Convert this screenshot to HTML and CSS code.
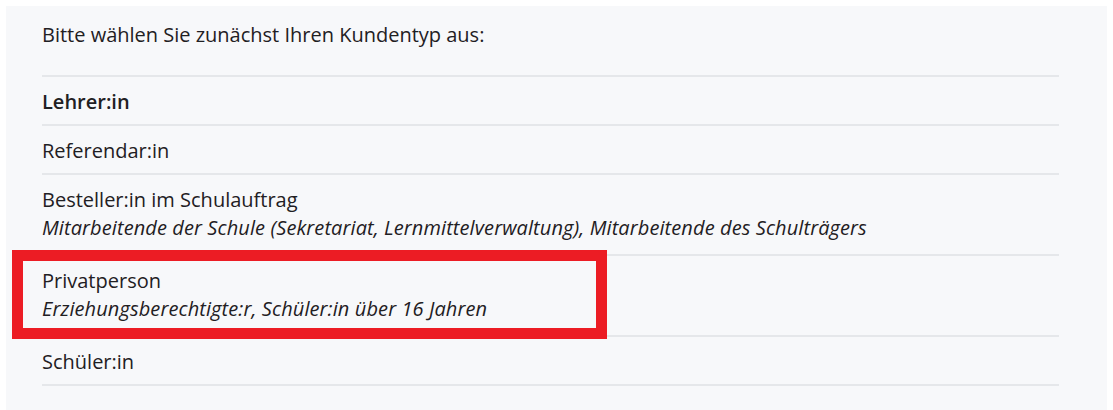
FILE: index.html
```html
<!DOCTYPE html>
<html lang="de">
<head>
<meta charset="utf-8">
<title>Kundentyp</title>
<link rel="stylesheet" href="styles.css">
</head>
<body>
<div class="panel">
  <p class="intro">Bitte wählen Sie zunächst Ihren Kundentyp aus:</p>
  <ul class="types">
    <li class="type type-active">Lehrer:in</li>
    <li class="type">Referendar:in</li>
    <li class="type">Besteller:in im Schulauftrag<span class="sub">Mitarbeitende der Schule (Sekretariat, Lernmittelverwaltung), Mitarbeitende des Schulträgers</span></li>
    <li class="type">Privatperson<span class="sub">Erziehungsberechtigte:r, Schüler:in über 16 Jahren</span></li>
    <li class="type">Schüler:in</li>
  </ul>
  <div class="highlight"></div>
</div>
</body>
</html>
```
FILE: styles.css
```css
html, body {
  margin: 0;
  padding: 0;
  background: #ffffff;
}
body {
  font-family: "Open Sans", "Noto Sans", sans-serif;
  font-size: 20px;
  line-height: 25px;
  color: #1f2023;
}
.panel {
  position: relative;
  margin: 6px 6px 0 6px;
  height: 404px;
  box-sizing: border-box;
  background: #f7f8fa;
  padding: 16px 48px 0 36px;
}
.intro {
  margin: 0 0 28px 0;
}
.types {
  list-style: none;
  margin: 0;
  padding: 0;
  border-top: 2px solid #e5e7ea;
}
.type {
  padding: 12px 0 10px 0;
  border-bottom: 2px solid #e5e7ea;
}
.type-active {
  font-weight: 600;
}
.sub {
  display: block;
  margin: 3px 0 4px 0;
  font-style: italic;
  letter-spacing: 0.1px;
}
.highlight {
  position: absolute;
  left: 6px;
  top: 244px;
  width: 595px;
  height: 89px;
  box-sizing: border-box;
  border: 11px solid #ec1c24;
}
```
